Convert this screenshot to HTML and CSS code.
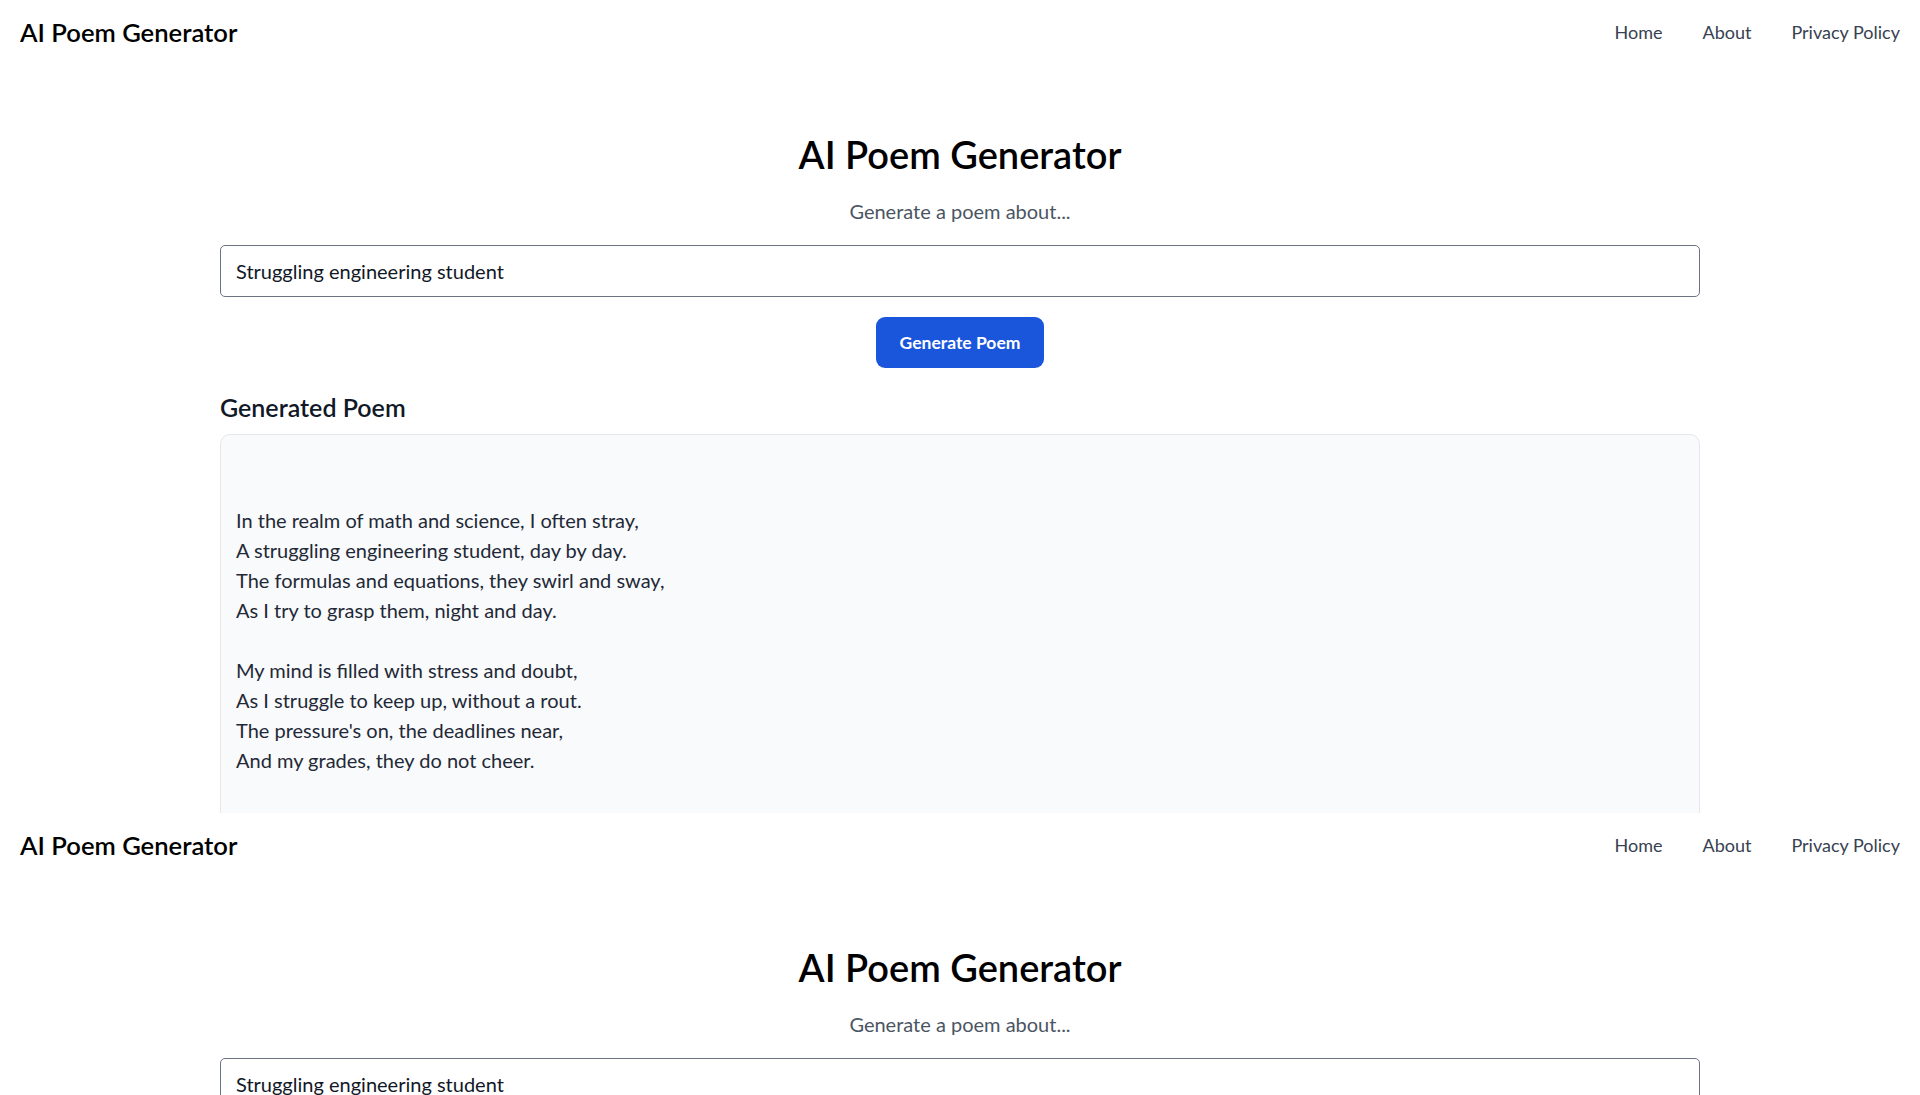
FILE: index.html
```html
<!DOCTYPE html>
<html lang="en">
<head>
<meta charset="utf-8">
<title>AI Poem Generator</title>
<link rel="stylesheet" href="styles.css">
</head>
<body>
<section class="frame">
  <nav class="nav">
    <a class="brand" href="#">AI Poem Generator</a>
    <ul class="links">
      <li><a href="#">Home</a></li>
      <li><a href="#">About</a></li>
      <li><a href="#">Privacy Policy</a></li>
    </ul>
  </nav>
  <main class="main">
    <h1 class="title">AI Poem Generator</h1>
    <p class="subtitle">Generate a poem about...</p>
    <input class="prompt" type="text" value="Struggling engineering student">
    <div class="actions"><button class="btn">Generate Poem</button></div>
    <h2 class="result-title">Generated Poem</h2>
    <div class="poem">

In the realm of math and science, I often stray,
A struggling engineering student, day by day.
The formulas and equations, they swirl and sway,
As I try to grasp them, night and day.

My mind is filled with stress and doubt,
As I struggle to keep up, without a rout.
The pressure's on, the deadlines near,
And my grades, they do not cheer.</div>
  </main>
</section>
<section class="frame frame-tail">
  <nav class="nav">
    <a class="brand" href="#">AI Poem Generator</a>
    <ul class="links">
      <li><a href="#">Home</a></li>
      <li><a href="#">About</a></li>
      <li><a href="#">Privacy Policy</a></li>
    </ul>
  </nav>
  <main class="main">
    <h1 class="title">AI Poem Generator</h1>
    <p class="subtitle">Generate a poem about...</p>
    <input class="prompt" type="text" value="Struggling engineering student">
  </main>
</section>
</body>
</html>
```

FILE: styles.css
```css
* { box-sizing: border-box; }
html, body { margin: 0; padding: 0; background: #fff; }
body { font-family: Lato, "Noto Sans", sans-serif; color: #111827; }
.frame { height: 813px; overflow: hidden; }
.frame-tail { height: 282px; }
.nav { height: 64px; display: flex; align-items: center; justify-content: space-between; padding: 0 20px; }
.brand { font-size: 25.6px; font-weight: 600; color: #000; text-decoration: none; }
.links { list-style: none; margin: 0; padding: 0; display: flex; gap: 40px; }
.links a { font-size: 18px; color: #374151; text-decoration: none; }
.main { width: 1480px; margin: 0 auto; padding-top: 66px; }
.title { margin: 0; text-align: center; font-size: 38px; line-height: 48px; font-weight: 600; color: #000; }
.subtitle { margin: 18px 0 0; text-align: center; font-size: 20px; line-height: 30px; color: #4b5563; }
.prompt { display: block; width: 100%; margin-top: 19px; height: 52px; padding: 10px 15px; font: inherit; font-size: 20px; color: #111827; border: 1px solid #6b7280; border-radius: 5px; background: #fff; }
.actions { display: flex; justify-content: center; margin-top: 20px; }
.btn { height: 51px; padding: 0 24px; background: #1a56db; color: #fff; border: 0; border-radius: 9px; font: inherit; font-size: 17.5px; font-weight: 700; }
.result-title { margin: 21px 0 9px; font-size: 25px; line-height: 36px; font-weight: 600; color: #111827; }
.poem { white-space: pre-line; border: 1px solid #e5e7eb; border-radius: 10px; background: #f9fafb; padding: 10px 15px 15px; font-size: 20px; line-height: 30px; color: #1f2937; min-height: 500px; }
```
